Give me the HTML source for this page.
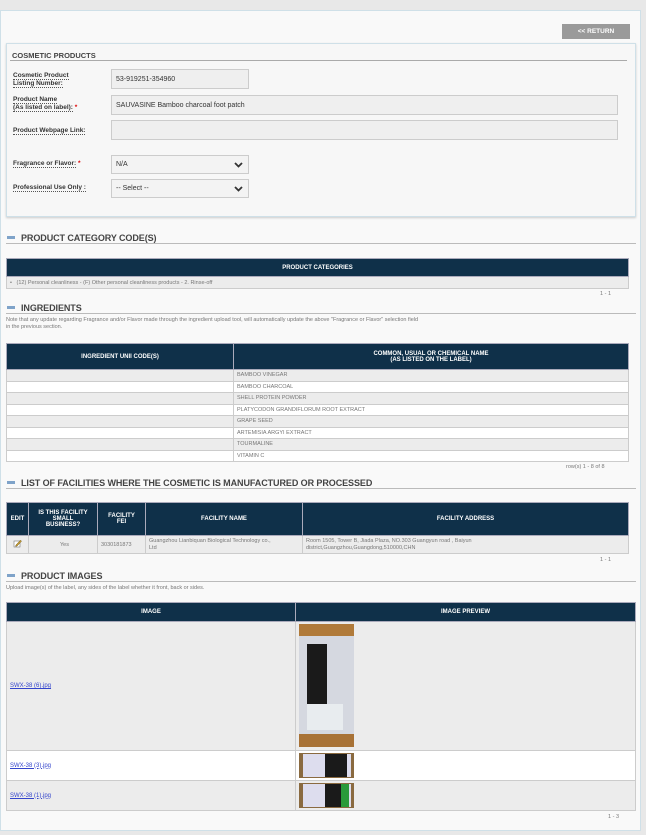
<!DOCTYPE html>
<html><head><meta charset="utf-8"><style>
*{box-sizing:border-box;margin:0;padding:0}
body{width:646px;height:835px;background:#e8e8e8;font-family:"Liberation Sans",Arial,sans-serif;position:relative;overflow:hidden;color:#555}
.a{position:absolute}
#panel{left:0;top:10px;width:641px;height:821px;background:#f9f9f9;border:1px solid #cfe0e8}
.btn{left:562px;top:24px;width:68px;height:15px;background:#9a9a9a;color:#fff;font-size:6.5px;font-weight:bold;text-align:center;line-height:15px}
#box{left:6px;top:43px;width:630px;height:174px;background:#f7f7f7;border:1px solid #cfe0e8;box-shadow:0 1px 2px #ccc}
.lbl{font-size:6.5px;color:#333;line-height:8px;font-weight:bold}
.lbl span{border-bottom:1px dotted #555}
.inp{background:#efefef;border:1px solid #ccc;font-size:7px;color:#333;padding-left:4px;display:flex;align-items:center}
.sel{background:#f3f3f3;border:1px solid #ccc;font-size:7px;color:#333;padding-left:4px;display:flex;align-items:center}
.sel svg{position:absolute;right:5px;top:6px}
.red{color:#d00}
.h{font-size:9.5px;color:#444;font-weight:bold;letter-spacing:-0.1px;transform:scaleX(0.95);transform-origin:left}
.dash{width:8px;height:3px;background:#7fa3c9}
.line{height:1px;background:#bbb}
table{border-collapse:collapse;position:absolute;font-size:5.5px}
th{background:#0f3049;color:#fff;font-weight:bold;border:1px solid #aab;font-size:6px}
td{border:1px solid #ccc;color:#777;padding-left:3px}
tr.g td{background:#ececec}
tr.w td{background:#fff}
.small{font-size:5.5px;color:#777}
a{color:#3344cc;text-decoration:underline;font-size:6px}
</style></head><body>
<div class="a" id="panel"></div>
<div class="a btn">&lt;&lt; RETURN</div>
<div class="a" id="box"></div>
<div class="a" style="left:12px;top:51px;font-size:7.5px;font-weight:bold;color:#444">COSMETIC PRODUCTS</div>
<div class="a line" style="left:10px;top:60px;width:617px;background:#aaa"></div>

<div class="a lbl" style="left:13px;top:72px"><span>Cosmetic Product</span><br><span>Listing Number:</span></div>
<div class="a inp" style="left:111px;top:69px;width:138px;height:20px">53-919251-354960</div>
<div class="a lbl" style="left:13px;top:96px"><span>Product Name</span><br><span>(As listed on label):</span> <b class="red">*</b></div>
<div class="a inp" style="left:111px;top:95px;width:507px;height:20px">SAUVASINE Bamboo charcoal foot patch</div>
<div class="a lbl" style="left:13px;top:127px"><span>Product Webpage Link:</span></div>
<div class="a inp" style="left:111px;top:120px;width:507px;height:20px"></div>
<div class="a lbl" style="left:13px;top:160px"><span>Fragrance or Flavor:</span> <b class="red">*</b></div>
<div class="a sel" style="left:111px;top:155px;width:138px;height:19px">N/A<svg width="9" height="6" viewBox="0 0 9 6"><path d="M1 1L4.5 4.5L8 1" stroke="#333" stroke-width="1.8" fill="none"/></svg></div>
<div class="a lbl" style="left:13px;top:184px"><span>Professional Use Only :</span></div>
<div class="a sel" style="left:111px;top:179px;width:138px;height:19px">-- Select --<svg width="9" height="6" viewBox="0 0 9 6"><path d="M1 1L4.5 4.5L8 1" stroke="#333" stroke-width="1.8" fill="none"/></svg></div>

<div class="a dash" style="left:7px;top:236px"></div>
<div class="a h" style="left:21px;top:233px">PRODUCT CATEGORY CODE(S)</div>
<div class="a line" style="left:6px;top:243px;width:630px"></div>
<table style="left:6px;top:258px;width:623px">
<tr><th style="height:18px">PRODUCT CATEGORIES</th></tr>
<tr class="g"><td style="height:12px">•&nbsp;&nbsp; (12) Personal cleanliness - (F) Other personal cleanliness products - 2. Rinse-off</td></tr>
</table>
<div class="a small" style="left:600px;top:291px">1 - 1</div>

<div class="a dash" style="left:7px;top:306px"></div>
<div class="a h" style="left:21px;top:303px">INGREDIENTS</div>
<div class="a line" style="left:6px;top:313px;width:630px"></div>
<div class="a small" style="left:6px;top:317px;line-height:7px">Note that any update regarding Fragrance and/or Flavor made through the ingredient upload tool, will automatically update the above "Fragrance or Flavor" selection field<br>in the previous section.</div>
<table style="left:6px;top:343px;width:623px">
<tr><th style="height:26px;width:227px">INGREDIENT UNII CODE(S)</th><th>COMMON, USUAL OR CHEMICAL NAME<br>(AS LISTED ON THE LABEL)</th></tr>
<tr class="g"><td style="height:11.5px"></td><td>BAMBOO VINEGAR</td></tr>
<tr class="w"><td style="height:11.5px"></td><td>BAMBOO CHARCOAL</td></tr>
<tr class="g"><td style="height:11.5px"></td><td>SHELL PROTEIN POWDER</td></tr>
<tr class="w"><td style="height:11.5px"></td><td>PLATYCODON GRANDIFLORUM ROOT EXTRACT</td></tr>
<tr class="g"><td style="height:11.5px"></td><td>GRAPE SEED</td></tr>
<tr class="w"><td style="height:11.5px"></td><td>ARTEMISIA ARGYI EXTRACT</td></tr>
<tr class="g"><td style="height:11.5px"></td><td>TOURMALINE</td></tr>
<tr class="w"><td style="height:11.5px"></td><td>VITAMIN C</td></tr>
</table>
<div class="a small" style="left:566px;top:464px">row(s) 1 - 8 of 8</div>

<div class="a dash" style="left:7px;top:481px"></div>
<div class="a h" style="left:21px;top:478px">LIST OF FACILITIES WHERE THE COSMETIC IS MANUFACTURED OR PROCESSED</div>
<div class="a line" style="left:6px;top:488px;width:630px"></div>
<table style="left:6px;top:502px;width:623px">
<tr><th style="height:33px;width:22px">EDIT</th><th style="width:69px">IS THIS FACILITY<br>SMALL<br>BUSINESS?</th><th style="width:48px">FACILITY<br>FEI</th><th style="width:157px">FACILITY NAME</th><th>FACILITY ADDRESS</th></tr>
<tr class="g"><td style="height:18px;text-align:center;padding:0"><svg width="9" height="9" viewBox="0 0 9 9"><rect x="1" y="2" width="6" height="6" fill="#fff" stroke="#777" stroke-width=".6"/><path d="M3 6L7.5 1.2L8.5 2.2L4 7L2.6 7.3Z" fill="#c9a030" stroke="#6b5010" stroke-width=".5"/></svg></td><td style="text-align:center">Yes</td><td>3030181873</td><td style="line-height:7px">Guangzhou Lianbiquan Biological Technology co.,<br>Ltd</td><td style="line-height:7px">Room 1505, Tower B, Jiada Plaza, NO.303 Guangyun road , Baiyun<br>district,Guangzhou,Guangdong,510000,CHN</td></tr>
</table>
<div class="a small" style="left:600px;top:557px">1 - 1</div>

<div class="a dash" style="left:7px;top:574px"></div>
<div class="a h" style="left:21px;top:571px">PRODUCT IMAGES</div>
<div class="a line" style="left:6px;top:581px;width:630px"></div>
<div class="a small" style="left:6px;top:585px">Upload image(s) of the label, any sides of the label whether it front, back or sides.</div>
<table style="left:6px;top:602px;width:630px">
<tr><th style="height:19px;width:289px">IMAGE</th><th>IMAGE PREVIEW</th></tr>
<tr class="g"><td style="height:129px"><a>SWX-38 (6).jpg</a></td><td style="vertical-align:top;padding-top:2px"><div style="width:55px;height:123px;background:linear-gradient(#b07a3a 0,#b07a3a 12px,#d5d8e0 12px,#d5d8e0 110px,#a87236 110px);position:relative"><div style="position:absolute;left:8px;top:20px;width:20px;height:68px;background:#1a1a1a"></div><div style="position:absolute;left:8px;top:80px;width:36px;height:26px;background:#e8ecef"></div></div></td></tr>
<tr class="w"><td style="height:30px"><a>SWX-38 (3).jpg</a></td><td><div style="width:55px;height:25px;background:#8a6a40;position:relative"><div style="position:absolute;left:4px;top:1px;width:48px;height:23px;background:#dde"></div><div style="position:absolute;left:26px;top:1px;width:22px;height:23px;background:#1a1a1a"></div></div></td></tr>
<tr class="g"><td style="height:30px"><a>SWX-38 (1).jpg</a></td><td><div style="width:55px;height:25px;background:#8a6a40;position:relative"><div style="position:absolute;left:4px;top:1px;width:48px;height:23px;background:#dde"></div><div style="position:absolute;left:26px;top:1px;width:16px;height:23px;background:#1a1a1a"></div><div style="position:absolute;left:42px;top:1px;width:8px;height:23px;background:#2a9a3a"></div></div></td></tr>
</table>
<div class="a small" style="left:608px;top:814px">1 - 3</div>
</body></html>
